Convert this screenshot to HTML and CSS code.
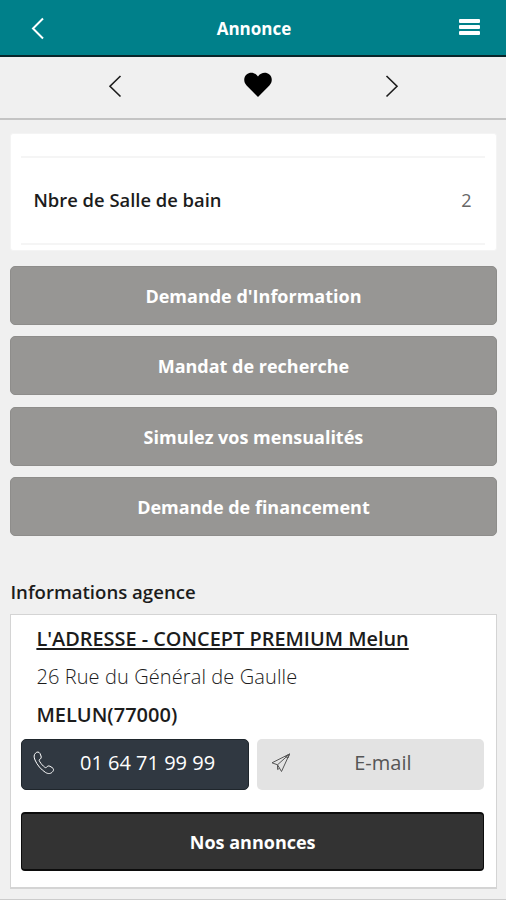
FILE: index.html
```html
<!DOCTYPE html>
<html lang="fr">
<head>
  <meta charset="UTF-8">
  <meta name="viewport" content="width=device-width, initial-scale=1.0">
  <title>Annonce</title>
  <link rel="stylesheet" href="styles.css">
</head>
<body>
  <header class="header">
    <a href="#" class="header-btn" aria-label="Retour">
      <svg width="14" height="24" viewBox="0 0 14 24"><path d="M12 2.5 L2 12.5 L12 22.5"/></svg>
    </a>
    <h1 class="header-title">Annonce</h1>
    <a href="#" class="header-btn menu-btn" aria-label="Menu">
      <span class="menu-bar"></span>
      <span class="menu-bar"></span>
      <span class="menu-bar"></span>
    </a>
  </header>

  <nav class="pager">
    <a href="#" aria-label="Annonce précédente">
      <svg width="14" height="24" viewBox="0 0 14 24"><path d="M12.5 2 L2 12.3 L12.5 22.5"/></svg>
    </a>
    <a href="#" class="heart" aria-label="Favori">
      <svg width="28" height="26" viewBox="0 0 28 26"><path d="M14 25 L2.6 13.4 C-0.8 9.8 -0.3 4.8 2.6 2.4 C6 -0.5 11.2 0.3 14 4.4 C16.8 0.3 22 -0.5 25.4 2.4 C28.3 4.8 28.8 9.8 25.4 13.4 Z"/></svg>
    </a>
    <a href="#" aria-label="Annonce suivante">
      <svg width="14" height="24" viewBox="0 0 14 24"><path d="M1.5 2 L12 12.3 L1.5 22.5"/></svg>
    </a>
  </nav>

  <main class="content">
    <section class="details">
      <div class="detail-row">
        <span class="detail-label">Nbre de Salle de bain</span>
        <span class="detail-value">2</span>
      </div>
    </section>

    <div class="actions">
      <a href="#" class="btn">Demande d'Information</a>
      <a href="#" class="btn">Mandat de recherche</a>
      <a href="#" class="btn">Simulez vos mensualités</a>
      <a href="#" class="btn">Demande de financement</a>
    </div>

    <h2 class="section-title">Informations agence</h2>

    <section class="agency">
      <div class="agency-info">
        <a href="#" class="agency-name">L'ADRESSE - CONCEPT PREMIUM Melun</a>
        <p class="agency-address">26 Rue du Général de Gaulle</p>
        <p class="agency-city">MELUN(77000)</p>
      </div>
      <div class="contacts">
        <a href="#" class="contact phone">
          <svg width="22" height="24" viewBox="0 0 22 24"><path d="M2.5 2.2 C4 0.5 6 0.7 7 2.5 L8 5 C8.6 6.6 8 7.8 6.5 8.5 C5.8 9 6.3 10 7 11 C8.5 13.3 9.8 14.7 11.7 16.2 C12.6 16.9 13.3 16.8 13.8 16 C14.5 14.8 15.8 14.7 17 15.3 L19.2 16.6 C20.8 17.6 20.9 19.3 19.7 20.6 C18 22.8 15.3 23.2 12.6 21.5 C8 18.6 4.2 14 2 9 C0.7 6 0.8 3.8 2.5 2.2 Z"/></svg>
          <span>01 64 71 99 99</span>
        </a>
        <a href="#" class="contact mail">
          <svg width="22" height="22" viewBox="0 0 22 22"><path d="M19.5 2 L2 10.8 L7.5 12.8 L11.5 19.5 Z M19.5 2 L7.5 12.8 L7.6 17.5 L9.6 16.2"/><path d="M15.5 4.5 L19.5 2 L18 6 Z"/></svg>
          <span>E-mail</span>
        </a>
      </div>
      <a href="#" class="btn btn-dark">Nos annonces</a>
    </section>
  </main>
</body>
</html>
```

FILE: styles.css
```css
* {
  box-sizing: border-box;
}

body {
  margin: 0;
  height: 900px;
  overflow: hidden;
  background-color: #f0f0f0;
  border-bottom: 1px solid #ccc;
  font-family: "Open Sans", "Noto Sans", sans-serif;
  font-size: 18px;
  color: #1c1c1c;
}

a {
  color: inherit;
  text-decoration: none;
}

svg {
  display: block;
  fill: none;
  stroke: currentColor;
}

.header {
  display: flex;
  justify-content: space-between;
  align-items: center;
  height: 57px;
  padding: 1px 26px 0 30px;
  background-color: #00808a;
  border-bottom: 2px solid #08262b;
  color: #fff;
}

.header-btn {
  width: 21px;
}

.header-btn svg {
  margin: -1px 0 0 1px;
  stroke-width: 2;
}

.header-title {
  margin: 0 2px 0 0;
  font-size: 17px;
  font-weight: 700;
}

.menu-btn {
  display: flex;
  flex-direction: column;
  gap: 2px;
  padding-bottom: 3px;
}

.menu-bar {
  height: 4px;
  border-radius: 1px;
  background-color: #fff;
}

.pager {
  display: flex;
  justify-content: space-between;
  height: 63px;
  padding: 17px 107px 0 108px;
  border-bottom: 2px solid #c4c4c4;
}

.pager svg {
  stroke-width: 1.6;
}

.pager .heart svg {
  fill: #000;
  stroke: none;
  margin: -2px 0 0 8px;
}

.content {
  padding: 13px 9.5px 0 10.4px;
}

.details {
  height: 118px;
  padding: 22px 11px 0 10px;
  background-color: #fff;
  border: 1px solid #f4f4f4;
  border-radius: 3px;
}

.detail-row {
  display: flex;
  justify-content: space-between;
  align-items: center;
  height: 89px;
  padding: 0 13px 2px 12px;
  border-top: 2px solid #f5f5f5;
  border-bottom: 2px solid #f5f5f5;
}

.detail-label {
  font-size: 18.4px;
  font-weight: 600;
}

.detail-value {
  color: #666;
}

.actions {
  display: grid;
  gap: 11.3px;
  margin-top: 15px;
}

.btn {
  display: flex;
  align-items: center;
  justify-content: center;
  height: 59px;
  padding-top: 1px;
  border: 1px solid #8e8d8b;
  border-radius: 5px;
  background-color: #979694;
  color: #fff;
  font-weight: 700;
}

.section-title {
  margin: 43px 0 0;
  font-size: 18.6px;
  font-weight: 600;
  line-height: 26px;
}

.agency {
  height: 275px;
  margin-top: 9px;
  padding: 5px 11.5px 0 10px;
  background-color: #fff;
  border: 1px solid #d4d4d4;
  border-bottom-width: 2px;
}

.agency-info {
  padding-left: 15px;
  font-size: 20px;
  line-height: 38px;
}

.agency-name {
  display: block;
  font-size: 19.9px;
  font-weight: 600;
  text-decoration: underline;
  text-decoration-thickness: 2px;
  text-underline-offset: 2px;
}

.agency-info p {
  margin: 0;
}

.agency-address {
  font-weight: 300;
  letter-spacing: 0.1px;
}

.agency-city {
  font-weight: 600;
}

.contacts {
  display: grid;
  grid-template-columns: 1fr 1fr;
  gap: 8px;
  margin-top: 5px;
}

.contact {
  display: flex;
  align-items: center;
  height: 51px;
  padding: 0 10px 0 13px;
  border-radius: 5px;
  font-size: 20px;
}

.contact span {
  flex: 1;
  padding-bottom: 3px;
  text-align: center;
}

.contact svg {
  margin-bottom: 3px;
}

.phone {
  background-color: #303841;
  border: 1px solid #1f262c;
  color: #fff;
}

.phone svg {
  margin-left: -2px;
  margin-right: 2px;
}

.mail {
  background-color: #e3e3e3;
  color: #555;
}

.btn-dark {
  margin-top: 22px;
  background-color: #333;
  border: 1px solid #0c0c0c;
  border-width: 2px 1px;
  border-radius: 4px;
}
```
